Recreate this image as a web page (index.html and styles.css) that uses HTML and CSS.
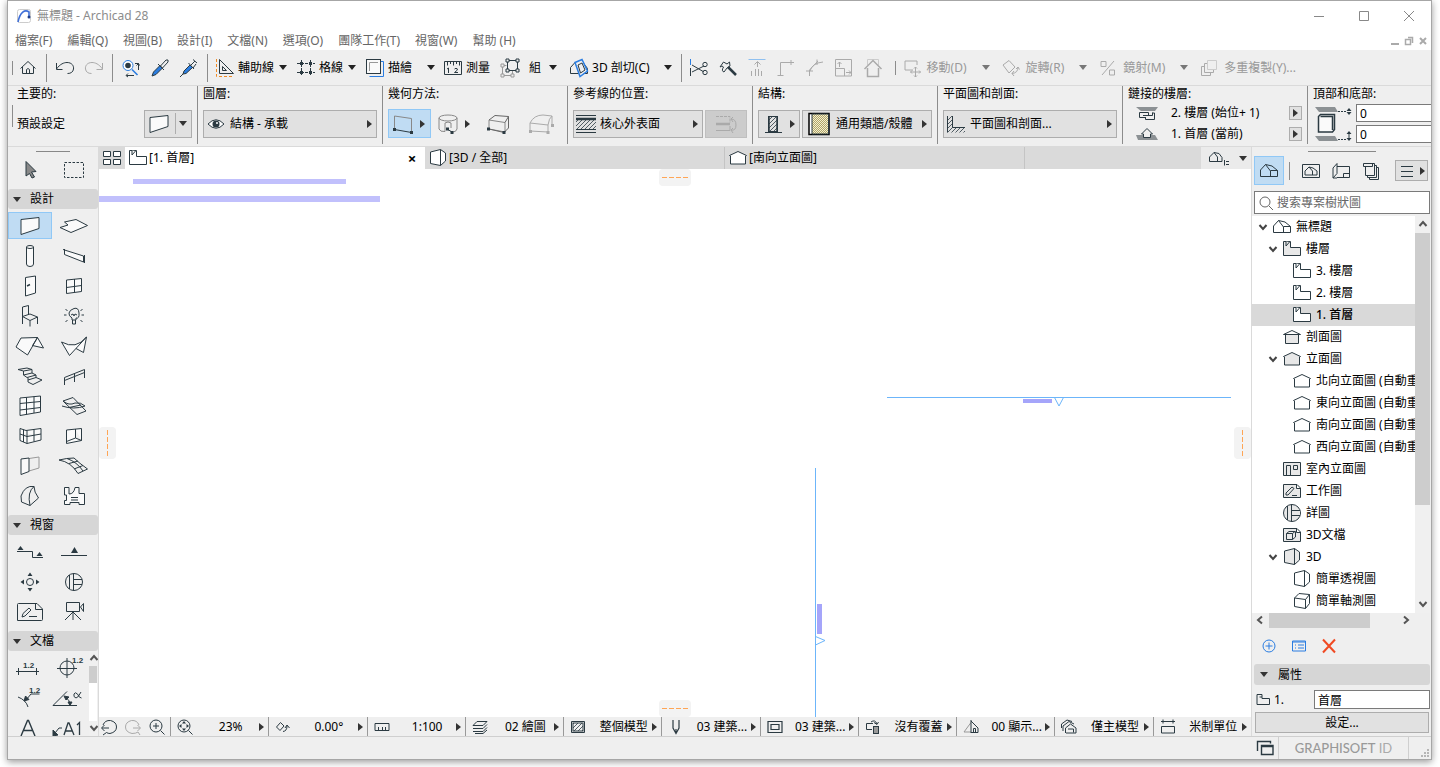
FILE: index.html
```html
<!DOCTYPE html>
<html lang="zh-Hant">
<head>
<meta charset="utf-8">
<title>無標題 - Archicad 28</title>
<link rel="stylesheet" href="styles.css">
</head>
<body>
<svg class="sprite" aria-hidden="true">
<defs>
<pattern id="hatch" width="4" height="4" patternUnits="userSpaceOnUse"><path d="M-1 1L1 -1M0 4L4 0M3 5L5 3" stroke="#2b3a42" fill="none" stroke-width=".8"/></pattern>
<pattern id="dots" width="2" height="2" patternUnits="userSpaceOnUse"><rect width="2" height="2" fill="#f4f0d0"/><path d="M0 0h1v1H0zM1 1h1v1H1z" fill="#b0a468"/></pattern>
<g id="home"><path d="M-7.5 .5L0 -6.5L7.5 .5M-5.5 -1V5.5H5.5V-1M-1.5 5.5V1.5Q0 -.5 1.5 1.5V5.5"/></g>
<g id="undo"><path d="M-8.5 -5V1.5H-2.5M-8.5 1C-5 -4 -1 -5.5 2 -5.5C7 -5.5 9 -2 8.5 1C8 4 6 5.5 2.5 5.5"/></g>
<g id="redo"><path d="M8.5 -5V1.5H2.5M8.5 1C5 -4 1 -5.5 -2 -5.5C-7 -5.5 -9 -2 -8.5 1C-8 4 -6 5.5 -2.5 5.5"/></g>
<g id="zoomsel"><circle cx="-3" cy="-2.5" r="5" stroke="#2a7de1" fill="#fff"/><circle cx="-3" cy="-2.5" r="2.8" fill="#2b3a42" stroke="none"/><path d="M1 1.5L6.5 7" stroke="#2a7de1" stroke-width="1.6"/><path d="M4 -4.5H7.5V2M5.5 -2.5L7.5 -4.5L8.5 -2.5M3 7.5H-4.5M-3 5.5L-5 7.5L-3 9"/></g>
<g id="dropper"><path d="M-8 8L-6.500 4L0 -2.500L2.500 0L-4 6.500Z" fill="#2a7de1" stroke="#2b3a42"/><path d="M-2 -4L4 2M.500 -2L6 -8Q9 -9 8 -6L2.500 0"/></g>
<g id="syringe"><path d="M-6 6L-5 3L1 -3L3.500 -.500L-3 5.500Z" fill="#2a7de1" stroke="#2b3a42"/><path d="M-9 9L-6 6M-.500 -5L5 1M2 -3L6 -7M4 -8.500L8 -5M1 -2L5 -6M4 0L7 -4"/></g>
<g id="guide"><path d="M-5.500 -8.500V5.500H8.500ZM-2.500 -1.500V2.500H1.500Z"/><path d="M-8.500 -9V8.500H9" stroke="#f08a24" stroke-dasharray="3 2"/></g>
<g id="gridic"><path d="M-9 -4.500H9M-9 4.500H9M-4.500 -8V8M4.500 -8V8" stroke-dasharray="3 1"/><path d="M-6 -6h3v3h-3zM3 -6h3v3h-3zM-6 3h3v3h-3zM3 3h3v3h-3z" fill="currentColor" stroke="none"/></g>
<g id="trace"><path d="M-5.500 8.500H8.500V-6.500H6" stroke="#2a7de1"/><rect x="-8.500" y="-8.500" width="14" height="14" fill="#fafafa"/><path d="M-5.500 3V-5.500H3" stroke="#999"/></g>
<g id="measure"><path d="M-8.500 -6.500H8.500V6.500H-8.500ZM-5.500 -6V-2.500M-2.500 -6V-4M.500 -6V-2.500M3.500 -6V-4M6.500 -6V-2.500M-4.500 0V5M-6 1L-4.500 0M1.500 1Q3 -.500 4.500 1Q4.500 2.500 1.500 4.500H5"/></g>
<g id="group"><path d="M-2.500 -7.500H7.500V2.500H-2.500Z"/><path d="M-3.500 -2.500H-7.500V7.500H2.500V3" stroke="#999"/><path d="M-4 -9h3v3h-3zM6 -9h3v3h-3zM6 1h3v3h-3zM-4 1h3v3h-3z" fill="#efefef"/><path d="M-9 -4h3v3h-3zM-9 6h3v3h-3zM1 6h3v3h-3z" fill="#efefef" stroke="#999"/></g>
<g id="cut3d"><path d="M-8.500 5.500V-.500L-4 -5.500H4L8.500 .500V5.500H-8.500M-4 -5.500L1 0V5"/><path d="M-4 -5.500L3 -8.500L8.500 3L1 8.500Z" fill="#efefef" stroke="#2a7de1" stroke-width="1.500"/><path d="M-1 -3L3 -5L6 2L1.500 5Z"/></g>
<g id="scissors"><path d="M-8.500 -9V-3" stroke="#2a7de1"/><path d="M-8.500 0V8M-7 -3L5 4M-7 4L5 -2"/><circle cx="6" cy="-3.500" r="2.200"/><circle cx="6" cy="4.500" r="2.200"/></g>
<g id="axe"><path d="M-8 -1L-4.500 -6L-1 -4L1.500 -6L2 -2L-1 0L-4 4Q-7 3 -4.500 -1L-6 -2Z"/><path d="M0 -1L8 7" stroke-width="2.500"/></g>
<g id="resize"><path d="M-8.500 -8.500H8.500" stroke="#8fc0f0"/><path d="M.500 -6V-1M-2.500 -3.500L.500 -6.500L3.500 -3.500M-5.500 3V8M-1.500 1V8M1.500 1V8M4.500 3V8"/></g>
<g id="corner"><path d="M-5.500 8V-5.500H8M-8.500 7.500H-2.500M5 -8V-3"/></g>
<g id="arcorner"><path d="M-5.500 8V2L3 -7M-9 3H-2M-5 3Q-3 -5 8 -6M2 -8.500V-3"/></g>
<g id="scaleic"><path d="M-8.500 -8.500H7.500V8H-8.500ZM-8.500 .500H.500V8M-4.500 -6V-1M-6.500 -4L-4.500 -6L-2.500 -4M2 4.500H7M5 2.500L7 4.500L5 6.500"/></g>
<g id="roofup"><path d="M-5.500 -3V-8.500H5.500V-3" stroke="#ccc"/><path d="M-8.500 1L0 -7.500L8.500 1M-5.500 0V8.500H5.500V0" stroke-width="1.500"/></g>
<g id="moveic"><path d="M1 2H-7V-7H5V-3"/><path d="M3.500 -1V9M-1.500 4H8.500M2 .500L3.500 -1L5 .500M2 7.500L3.500 9L5 7.500M0 2.500L-1.500 4L0 5.500M7 2.500L8.500 4L7 5.500"/></g>
<g id="rotic"><path d="M-8 -3L-2 -7.500L4 -1L-2 5Z M7 -1Q7 5 1 5.500M5 1L7 -1L8.500 1.500M3 3L1 5.500L3 8"/></g>
<g id="mirror"><path d="M-7 -6.500h5v5h-5zM1.500 2h5v5h-5zM6 -7L-6 7"/></g>
<g id="multi"><path d="M-1.500 -7.500h9v9h-9z" stroke="#ccc"/><path d="M-2 -4.500H-4.500V4.500H4.500V2M-5 -1.500H-7.500V7.500H1.500V5"/></g>
<g id="wall"><path d="M-9 -6.500L9 -8.500V2.500L-9 8.500Z" fill="#fafafa"/></g>
<g id="eye"><path d="M-8 0Q0 -8.500 8 0Q0 8.500 -8 0Z" fill="#fff"/><circle r="3.500" fill="#2b3a42" stroke="none"/><circle cx="1" cy="-1" r="1" fill="#fff" stroke="none"/></g>
<g id="geo1"><path d="M-8.500 6V-8L8.500 -5.500V8.500" stroke="#888"/><path d="M-8.500 5.500L8.500 8.500"/><path d="M-10 4h3v3h-3zM7 7h3v3h-3z" fill="#2b3a42" stroke="none"/></g>
<g id="geo2"><g stroke="#888"><ellipse cx="0" cy="-6" rx="9" ry="3"/><path d="M-9 -6V5Q-8 8 -3 7.500V-1Q0 -3 3 -1V4M9 -6V5Q8 8 5 8"/></g><path d="M-1 5L4 8"/><path d="M-2 3.500h3v3h-3zM2.500 7h3v3h-3z" fill="#2b3a42" stroke="none"/></g>
<g id="geo3"><path d="M-9 5V-4L7 -1.500V8Z" stroke="#888"/><path d="M-9 -4L-3 -8.500L10.500 -7.500V4L6 8.500M7 -1.500L10.500 -7.500M-9 5L6 8.500" stroke="#666"/><path d="M-11 3.500h3v3h-3zM4.500 7h3v3h-3z" fill="#2b3a42" stroke="none"/></g>
<g id="geo4"><path d="M-11 7V-1Q-7 -9 2 -9L11 -8V2M-11 -1L7 1Q8 -6 11 -8M7 1V8L-11 7"/><path d="M-12 6h3v3h-3zM5.500 7h3v3h-3zM10 0h3v3h-3z" fill="currentColor" stroke="none"/></g>
<g id="refl"><rect x="-10" y="-4" width="20" height="9" fill="url(#hatch)" stroke="none"/><path d="M-10 -8.500H10M-10 8.500H10M-10 5.500H10"/><path d="M-10 -5H10" stroke-width="2.500"/></g>
<g id="flip"><path d="M-7 -7.500H7V-1" stroke-dasharray="3 1"/><path d="M-7 6.500H7V2M8 -5Q13 -5 13 1T8 6M10 -7L8 -5L10 -2M10 4L8 6L10 9"/><path d="M-7 0H7" stroke-width="2.500"/></g>
<g id="struct"><rect x="-4.500" y="-7.500" width="9" height="15" fill="url(#hatch)"/><path d="M-8 8.500H9" /><path d="M-4 -8V8M4 -8V8" stroke-width="1.500"/></g>
<g id="compo"><rect x="-10" y="-10.500" width="20" height="21" fill="#fff" stroke="#000" stroke-width="1.500"/><path d="M-7 -10H9.500V10H-7Z" fill="url(#dots)"/></g>
<g id="plansec"><path d="M-8.500 -8V8.500H9V3.500H-3.500V-8Z" fill="url(#hatch)" stroke="none"/><path d="M-8.500 -8V8.500M-3.500 -8V3.500H9"/></g>
<g id="story2"><path d="M-11 -6H11L8 -2H-6Z" fill="#8c9194" stroke="none"/><path d="M-1 4.500H-7.500V-.500H1.500V2.500M-4 2.500H5.500V-.500M5.500 0H7.500V6.500H-1.500V4"/></g>
<g id="story1"><path d="M-11 1H8L11 6H-9Z" fill="#8c9194" stroke="none"/><path d="M-5.500 0L0 -5.500L5.500 0H3.500V3.500H-3.500V0Z" fill="#efefef"/></g>
<g id="topbot"><path d="M-18 -17H2L5 -12H-14ZM-18 12H2L5 17H-14Z" fill="#8c9194" stroke="none"/><path d="M-14.500 -7.500L-12.500 -9.500H1.500V5.500L-.500 8H-14.500ZM-12.500 -7.500H-.500V6" stroke-width="1.500" fill="#fafafa"/><path d="M5 -12.500H14M5 15.500H14" stroke-dasharray="2 1"/><path d="M16 -16L13.500 -13H18.500ZM16 -9L13.500 -12H18.500ZM16 7L13.500 10H18.500ZM16 17L13.500 14H18.500Z" fill="#2b3a42" stroke="none"/><path d="M16 9V15"/></g>
<g id="cursor"><path d="M-4 -8.500L6 1.500L1.500 2L4.500 7L2 8L-.500 3.500L-4 6Z" fill="#888" /></g>
<g id="marquee"><rect x="-9.500" y="-7.500" width="19" height="15" stroke-dasharray="2.500 1.500"/></g>
<g id="slab"><path d="M-9.500 -4L2 -6.500L13.500 -.500L-3 6.500L-14 1.500L-6 -1Z" fill="#fafafa"/></g>
<g id="column"><path d="M-3.500 -9V8Q-3.500 10.500 0 10.500Q3.500 10.500 3.500 8V-9" fill="#fafafa"/><ellipse cx="0" cy="-9" rx="3.500" ry="1.500"/></g>
<g id="beam"><path d="M-9.500 -6L9.500 0V6L-9.500 -1.500Z" fill="#fafafa"/><path d="M-11 -6.500L-9 -6M10.500 -1V7M9.500 6H11M-9.500 -7V-2"/></g>
<g id="door"><path d="M-4.500 -8.500L5.500 -10V7L-4.500 10Z" fill="#fafafa"/><path d="M-3 0L0 -1.500" stroke-width="1.500"/></g>
<g id="window"><path d="M-7.500 -6L7.500 -7.500V5.500L-7.500 7.500ZM.500 -7V6.500M-7.500 1.500L7.500 -.500" fill="#fafafa"/></g>
<g id="chair"><path d="M-7.500 8V-9L-1.500 -10.500V-1M-7.500 .500L0 -2L7.500 1L0 4.500ZM7.500 1V8M0 4.500V10.500"/></g>
<g id="lamp"><path d="M-2 4V2Q-5.500 0 -5 -3T0 -7.500T5 -3T2 2V4ZM-1.500 4V8H1.500V4M-3 -1L-1 -2L0 0L1 -2L3 -1M-10 -1H-7.500M7.500 -1H10M-8.500 -7L-6.500 -5M8.500 -7L6.500 -5M-8.500 6L-6.500 4M8.500 6L6.500 4"/></g>
<g id="roof"><path d="M-14 1L-9 -8L7.500 -8.500L-2.500 9ZM7.500 -8.500L13.500 2L2.500 -.500Z" fill="#fafafa"/></g>
<g id="shell"><path d="M-12.500 -4Q2 4 12.500 -9L-4.500 9.500ZM2 2.500L9.500 6.500L12.500 -9" fill="#fafafa"/></g>
<g id="stair"><path d="M-12 -6.500L-3 -8L2 -6.500L-6.500 -5ZM2 -6.500V-3L-6.500 -1V-5M2 -3L6 -1L-3 1.500L-6.500 -1M6 -1V1.500L-2 4V1.500M6 1.500L12 4L3 8.500L-2 6V4"/></g>
<g id="railing"><path d="M-9.500 9V1.500L10.500 -6.500V2M-9.500 4.500L10.500 -3.500M.500 -2.500V6"/></g>
<g id="curtain"><path d="M-10 -8L10.500 -10V6L-10 9.500ZM-3.500 -8.500V8.500M4 -9.500V7M-10 -2.500L10.500 -4.500M-10 4L10.500 1.500" fill="#fafafa"/></g>
<g id="meshes"><path d="M-11 -5L-1 -8.500L12 5L3 8.500ZM-12 0Q0 4 11 0M-11 -5Q-5 0 1 -3Q7 -4 11 0M-5 1.500L7 -1"/></g>
<g id="cwall"><path d="M-10 -7.500L-4 -5.500L11 -7.500V4L-3 7.500L-10 4.500ZM-10 -2L-3 .500L11 -2M-6.500 -6.500V6M-3 -5.500V7.500M4 -6.500V5.500" fill="#fafafa"/></g>
<g id="skyl"><path d="M-7.500 -6L7.500 -7.500V4.500L-7.500 7.500ZM1.500 -7V2L7.500 4.500M1.500 2L-7.500 5.500" fill="#fafafa"/></g>
<g id="opening"><path d="M-1 -7.500L9 -9V2L-1 5" stroke="#999"/><path d="M-9 -7L-1 -8V5.500L-9 8.500Z" fill="#fafafa"/></g>
<g id="meshg"><path d="M-15 -6Q-7 -8 0 -8Q5 -3 13.500 3L4 7.500Q-3 -4 -15 -6ZM-7 -7.500Q3 -4 9 5M-5 -2.500L4 -5M0 3L9 -.500"/></g>
<g id="morph"><path d="M-9 0Q-5 -11 4 -9.500Q4 -4 8.500 2L0 9.500L-8.500 6ZM4 -9.500Q-3 -4 0 9.500"/></g>
<g id="zone"><path d="M-9.500 -8.500H-5V-2Q0 -2 1 -8.500H5V-2.500H10.500V8.500H5V6.500H-4V8.500H-9.500V4.500H-7.500V-1H-9.500ZM-3 1.500H4M-3 4H4" fill="#fafafa"/></g>
<g id="section"><path d="M-13 -.500H2.500V5.500M2.500 5.500H13"/><path d="M-12.500 -2L-9.500 -6L-6.500 -2ZM6.500 4L9.500 0L12.500 4Z" fill="#2b3a42" stroke="none"/></g>
<g id="elev"><path d="M-13 3.500H13"/><path d="M-3 1L0.500 -5L4 1Z" fill="#2b3a42" stroke="none"/></g>
<g id="intel"><circle r="3.500"/><path d="M-2.500 -6L0 -9.500L2.500 -6ZM-2.500 6L0 9.500L2.500 6ZM-6 -2.500L-9.500 0L-6 2.500ZM6 -2.500L9.500 0L6 2.500Z" fill="#2b3a42" stroke="none"/></g>
<g id="detail"><circle r="8.500"/><path d="M-4.500 -7V7M-.500 -8.500V8.500M8 -2.500H-.500V2.500H8"/></g>
<g id="worksheet"><path d="M-12.500 -7.500Q-12.500 -8.500 -11.500 -8.500H7L12.500 -3V7.500Q12.500 8.500 11.500 8.500H-12.500ZM5.500 -8.500V-2.500H12.500M-8 5L-7 1.500L-1 -4L1 -2L-5 4ZM-1 4.500H7"/></g>
<g id="camera"><path d="M-7.500 -9.500H5.500V-.500H-7.500ZM6.500 -5L9.500 -8.500V-.500ZM-1 -.500V8M-1 0L-9 8M-1 0L7 8"/></g>
<g id="dim"><path d="M-13 3.500H10M-10.500 0V7M7.500 0V7"/><text x="-6" y="0" class="tiny">1.2</text></g>
<g id="level"><circle cx="-3" cy="0" r="7"/><path d="M-13 .500H7M-3 -10V10"/><text x="2" y="-5" class="tiny">1.2</text></g>
<g id="radial"><path d="M-11 -1Q-3 2 -1 9M10.500 -4H2L-3 2"/><path d="M-5 3L-3.500 -2L0 1.500Z" fill="#2b3a42"/><text x="0" y="-5" class="tiny">1.2</text></g>
<g id="angle"><path d="M-17 7.500H7M-17 7.500L-3 -6.500M-5 -1Q0 2 0 6"/><path d="M-6 -2L-1 -1L-4 2ZM-2 4H2L0 7.500Z" fill="#2b3a42"/><path d="M11 -6Q8 0 6 0Q3 -1 4 -4Q5 -6.500 7.500 -4Q9 0 11.500 0"/></g>
<g id="texta"><path d="M-8 8L-1.500 -7.500H-.500L6 8M-5.500 2.500H3.500" stroke-width="1.400"/></g>
<g id="labela"><path d="M-8 0H-11L-15 5"/><path d="M-17 8V2L-12 7Z" fill="#2b3a42"/><path d="M-6 7L-2 -5H-1L4 7M-4.500 3H2M7 -3L9.500 -5.500V7" stroke-width="1.300"/></g>
<g id="tiles"><path d="M-8.500 -6.500H-1.500V-1.500H-8.500ZM1.500 -6.500H8.500V-1.500H1.500ZM-8.500 1.500H-1.500V6.500H-8.500ZM1.500 1.500H8.500V6.500H1.500Z"/></g>
<g id="story"><path d="M-8.500 -7.500H-1.500V-1.500H8.500V6.500H-8.500Z"/><path d="M-6 -7.500V-3L-2.500 -7"/></g>
<g id="box3d"><path d="M-7.500 -6L2.500 -8.500V7.500L-7.500 5.500ZM2.500 -8.500L7.500 -5V3L2.500 7.500"/></g>
<g id="proj"><path d="M-8.500 -1L-3.500 -6.500L3 -5L8.500 -.500V5.500H-8.500V-1M-3.500 -6.500L1.500 0V5.500M1.500 -.500H8.500"/></g>
<g id="projsmall"><path d="M-9.500 -1L-5 -5.500L0 -4.500L3 -.500V3.500H-9.500V-1M-5 -5.500L-1.500 -1V3.500M5.500 2V7.500M7 3.500H10M7 6.500H10"/></g>
<g id="viewmap"><path d="M-8.500 -6.500H8.500V6.500H-8.500ZM-6 4V0L-2 -4L2 -3L6 0V4H-6M-2 -4L1.500 0V4"/></g>
<g id="layout"><path d="M-4 -4.500H8.500V6.500H-4M-8 7V-3L-4 -7.500V2.500L-8 7H-4M2.500 6.500V2.500H8.500"/></g>
<g id="publish"><path d="M-5.500 -5V4.500H3.500V-7.500H-5.500M-7.500 -7.500H1.500V-4.500H-7.500ZM3.500 -5.500H5.500V6.500H-3.500V5M6 -3.500H7.500V8.500H-1.500V7"/></g>
<g id="burger"><path d="M-6 -4.500H6M-6 .500H6M-6 5.500H6"/></g>
<g id="mag"><circle cx="-1" cy="-1" r="5"/><path d="M3 3L7 7"/></g>
<g id="secic"><path d="M-6.500 -2.500H6.500V6.500H-6.500Z" fill="#e8e8e8"/><path d="M-8.500 -2.500L0 -6.500L8.500 -2.500Z"/></g>
<g id="elic"><path d="M-8.500 -2.500L0 -6.500L8.500 -2.500L7.500 -2V6H-7.500V-2Z"/></g>
<g id="interior"><path d="M-8.500 -6.500H8.500V6.500H-8.500Z" fill="#e8e8e8"/><path d="M-5.500 6.500V-3.500H-1.500V6.500M1.500 -3.500H5.500V.500H1.500Z"/></g>
<g id="worksm"><path d="M-8.500 -6.500H5L8.500 -3V6.500H-8.500ZM4.500 -6V-2.500H8M-6 4V2L0 -4L2 -2.500L-4 4ZM0 4.500H5"/></g>
<g id="doc3d"><path d="M-8.500 -6.500H5L8.500 -3V6.500H-8.500ZM4.500 -6V-2.500H8M-5.500 -1.500H.500V4.500H-5.500ZM-5.500 -1.500L-3 -3.500H3.500V2L.500 4.500M.500 -1.500L3 -3.500"/></g>
<g id="axo"><path d="M-7.500 -3L3.500 -1.500V7.500L-7.500 5.500ZM-7.500 -3L-3 -7.500L7.500 -6.500V2.500L3.500 7.500M3.500 -1.500L7.500 -6.500"/></g>
<g id="plus"><circle r="6"/><path d="M-3.500 0H3.500M0 -3.500V3.500"/></g>
<g id="listic"><path d="M-6.500 -5H6.500V5H-6.500ZM-4 -1H-3M-4 2H-3M-1 -1H5M-1 2H5M-6.500 -4H6.500"/></g>
<g id="cross"><path d="M-6 -6.500L6 6.500M6 -6.500L-6 6.500"/></g>
<g id="folder"><path d="M-6 -5.500H-1V-1.500H6.500V4.500H-6ZM-1 -3H-3.500"/></g>
<g id="zprev"><path d="M-7 1H0M-4.500 -2L-7.500 1L-4.500 4M-6 -2Q-4 -7 1.500 -6.500Q7.500 -5 7.500 0T1 6.500Q-1 6.500 -2.500 5.500L-6 8"/></g>
<g id="znext"><path d="M7 1H0M4.500 -2L7.500 1L4.500 4M6 -2Q4 -7 -1.500 -6.500Q-7.500 -5 -7.500 0T-1 6.500Q3 6.500 5 5L7 8"/></g>
<g id="zin"><circle cx="-1" cy="-1" r="6"/><path d="M3.500 3.500L7.500 7.500M-4 -1H2M-1 -4V2"/></g>
<g id="zfit"><circle cx="-1" cy="-1" r="6"/><path d="M3.500 3.500L7.500 7.500"/><path d="M-1 -6L1 -3.500H-3ZM-1 4L1 1.500H-3ZM-6 -1L-3.500 -3V1ZM4 -1L1.500 -3V1Z" fill="currentColor" stroke="none"/></g>
<g id="orient"><path d="M-6.500 0L-2.500 -4.500L1 -1L-3 3.500ZM0 4.500Q4 4 4 -1M2 1L4 -2L6.500 1"/></g>
<g id="scale2"><path d="M-7 -3.500H7V3.500H-7ZM-3.500 3V0M.500 3V0M3.500 3V0"/></g>
<g id="layers"><path d="M-7 -1.500L-3 -5.500H7L3 -1.500ZM-7 1.500H3L7 -2.500M-7 4.500H3L7 .500M-5 6.500H3L7 3"/></g>
<g id="modelf"><path d="M-6.500 -5.500H6.500V5.500H-6.500Z"/><rect x="-5" y="-4" width="10" height="8" fill="url(#hatch)"/></g>
<g id="pen"><path d="M-3 -7V1L0 6.500L3 1V-7M0 2V5" stroke-width="1.200"/></g>
<g id="frame"><path d="M-7 -5.500H7V5.500H-7ZM-4 -2.500H4V2.500H-4Z" stroke-width="1.200"/></g>
<g id="override"><path d="M-1 2.500H-6.500V-3.500H0M-2 -5Q2 -8 4 -3M1 -4.500L4 -2.500L5.500 -5"/><rect x="0.500" y="-.500" width="5" height="7" fill="#999"/></g>
<g id="reno"><path d="M0 5H-7L0 -4.500" stroke="#999"/><path d="M0 -7V6M0 -6L7 1V5.500H0M2.500 5.500V1.500H4.500V5"/></g>
<g id="designo"><path d="M-3.500 6V1L1.500 -3L7 1V6H-3M-1 2H4.500V5.500M-6 4V-1L0 -5.500L5 -3M-7.500 1V-3L-2 -7L3 -5.500"/></g>
<g id="units"><path d="M-7 -5.500H7M-5 -7.500V-3.500M5 -7.500V-3.500M-6.500 -.500H6.500V6H-6.500Z"/></g>
<g id="windows"><path d="M-7.500 3V-6.500H5.500V-4.500M-3.500 -2.500H8V6.500H-3.500ZM-3.500 -1.500H8" stroke-width="1.400"/></g>
<g id="chev"><path d="M-3.500 -2L0 2L3.500 -2" stroke-width="2"/></g>
</defs>
</svg>

<div class="window">
<header class="titlebar">
  <svg class="logo" viewBox="0 0 14 14"><rect x=".5" y=".5" width="13" height="13" rx="2" fill="#fff" stroke="#ccc"/><path d="M1 13C3 3 8 0 12 3V7" fill="none" stroke="#3f6fd8" stroke-width="1.600"/><circle cx="12" cy="8" r="1.500" fill="#1d3f8f"/></svg>
  <h1>無標題 - Archicad 28</h1>
  <div class="winbtns">
    <button aria-label="最小化"><svg viewBox="-6 -6 12 12"><path d="M-5 .5H5"/></svg></button>
    <button aria-label="最大化"><svg viewBox="-6 -6 12 12"><path d="M-4.5 -4.5H4.500V4.500H-4.500Z"/></svg></button>
    <button aria-label="關閉"><svg viewBox="-6 -6 12 12"><path d="M-5 -5L5 5M5 -5L-5 5"/></svg></button>
  </div>
</header>
<nav class="menubar">
  <button>檔案(F)</button><button>編輯(Q)</button><button>視圖(B)</button><button>設計(I)</button><button>文檔(N)</button><button>選項(O)</button><button>團隊工作(T)</button><button>視窗(W)</button><button>幫助 (H)</button>
  <div class="docbtns">
    <button aria-label="最小化文件"><svg viewBox="-5 -5 10 10"><path d="M-4 3H4" stroke-width="2"/></svg></button>
    <button aria-label="還原文件"><svg viewBox="-5 -5 10 10"><path d="M-3.500 -1.500H1.500V3.500H-3.500ZM-1 -3.500H3.500V2" stroke-width="1.500"/></svg></button>
    <button aria-label="關閉文件"><svg viewBox="-5 -5 10 10"><path d="M-3 -3L3 3M3 -3L-3 3" stroke-width="2"/></svg></button>
  </div>
</nav>

<div class="toolbar">
  <i class="sep short"></i>
  <button aria-label="首頁"><svg class="ic"><use href="#home"/></svg></button>
  <i class="sep"></i>
  <button aria-label="復原"><svg class="ic"><use href="#undo"/></svg></button>
  <button aria-label="重做" disabled><svg class="ic"><use href="#redo"/></svg></button>
  <i class="sep"></i>
  <button aria-label="尋找並選取"><svg class="ic"><use href="#zoomsel"/></svg></button>
  <button aria-label="拾取參數"><svg class="ic"><use href="#dropper"/></svg></button>
  <button aria-label="注入參數"><svg class="ic"><use href="#syringe"/></svg></button>
  <i class="sep"></i>
  <button class="lab"><svg class="ic"><use href="#guide"/></svg>輔助線</button><button class="caret" aria-label="輔助線選項"></button>
  <button class="lab"><svg class="ic"><use href="#gridic"/></svg>格線</button><button class="caret" aria-label="格線選項"></button>
  <button class="lab"><svg class="ic"><use href="#trace"/></svg>描繪</button><button class="caret far" aria-label="描繪選項"></button>
  <button class="lab"><svg class="ic"><use href="#measure"/></svg>測量</button>
  <button class="lab wide"><svg class="ic"><use href="#group"/></svg>組</button><button class="caret mid" aria-label="組選項"></button>
  <button class="lab"><svg class="ic"><use href="#cut3d"/></svg>3D 剖切(C)</button><button class="caret far" aria-label="剖切選項"></button>
  <i class="sep"></i>
  <button aria-label="分割"><svg class="ic"><use href="#scissors"/></svg></button>
  <button aria-label="修剪"><svg class="ic"><use href="#axe"/></svg></button>
  <button aria-label="調整" disabled><svg class="ic"><use href="#resize"/></svg></button>
  <button aria-label="相交" disabled><svg class="ic"><use href="#corner"/></svg></button>
  <button aria-label="圓角" disabled><svg class="ic"><use href="#arcorner"/></svg></button>
  <button aria-label="調整大小" disabled><svg class="ic"><use href="#scaleic"/></svg></button>
  <button aria-label="修剪到屋頂" disabled><svg class="ic"><use href="#roofup"/></svg></button>
  <i class="sep short lead"></i>
  <div class="edit">
    <button class="lab" disabled><svg class="ic"><use href="#moveic"/></svg>移動(D)</button><button class="caret far" disabled aria-label="移動選項"></button>
    <button class="lab" disabled><svg class="ic"><use href="#rotic"/></svg>旋轉(R)</button><button class="caret far" disabled aria-label="旋轉選項"></button>
    <button class="lab" disabled><svg class="ic"><use href="#mirror"/></svg>鏡射(M)</button><button class="caret far" disabled aria-label="鏡射選項"></button>
    <button class="lab" disabled><svg class="ic"><use href="#multi"/></svg>多重複製(Y)...</button>
  </div>
</div>

<div class="infobox">
  <section class="first"><h2>主要的:</h2><div class="row"><span class="grow">預設設定</span><button class="box split" aria-label="預設設定選擇"><svg class="ic"><use href="#wall"/></svg><i class="bar"></i><i class="down"></i></button></div></section>
  <section><h2>圖層:</h2><div class="row"><button class="box fill"><svg class="ic tight"><use href="#eye"/></svg><span>結構 - 承載</span><i class="tri"></i></button></div></section>
  <section><h2>幾何方法:</h2><div class="row"><button class="geo on" aria-label="直牆"><svg class="ic"><use href="#geo1"/></svg><i class="tri"></i></button><button class="geo" aria-label="曲牆"><svg class="ic"><use href="#geo2"/></svg><i class="tri"></i></button><button class="geo plain" aria-label="梯形牆"><svg class="ic"><use href="#geo3"/></svg></button><button class="geo plain" disabled aria-label="多邊形牆"><svg class="ic"><use href="#geo4"/></svg></button></div></section>
  <section><h2>參考線的位置:</h2><div class="row"><button class="box fill"><svg class="ic tight"><use href="#refl"/></svg><span>核心外表面</span><i class="tri"></i></button><button class="box flip" disabled aria-label="翻轉"><svg class="ic"><use href="#flip"/></svg></button></div></section>
  <section><h2>結構:</h2><div class="row"><button class="box small" aria-label="結構類型"><svg class="ic"><use href="#struct"/></svg><i class="tri"></i></button><button class="box fill"><svg class="ic"><use href="#compo"/></svg><span>通用類牆/殼體</span><i class="tri"></i></button></div></section>
  <section><h2>平面圖和剖面:</h2><div class="row"><button class="box fill"><svg class="ic tight"><use href="#plansec"/></svg><span>平面圖和剖面...</span><i class="tri"></i></button></div></section>
  <section><h2>鏈接的樓層:</h2><div class="links">
    <div><svg class="ic"><use href="#story2"/></svg><span>2. 樓層 (始位+ 1)</span><button aria-label="選擇頂部樓層"><i class="tri"></i></button></div>
    <div><svg class="ic"><use href="#story1"/></svg><span>1. 首層 (當前)</span><button aria-label="選擇首層"><i class="tri"></i></button></div></div></section>
  <section class="last"><h2>頂部和底部:</h2><div class="offsets"><svg class="tb"><use href="#topbot"/></svg><div><input value="0" aria-label="頂部偏移"><input value="0" aria-label="底部偏移"></div></div></section>
</div>

<main class="workspace">
<aside class="toolbox">
  <i class="grip"></i>
  <div class="tools pick"><button aria-label="箭頭"><svg class="ic"><use href="#cursor"/></svg></button><button aria-label="選取框"><svg class="ic"><use href="#marquee"/></svg></button></div>
  <h3><i class="down"></i>設計</h3>
  <div class="tools">
    <button class="on" aria-label="牆"><svg class="ic"><use href="#wall"/></svg></button><button aria-label="板"><svg class="ic"><use href="#slab"/></svg></button>
    <button aria-label="柱"><svg class="ic"><use href="#column"/></svg></button><button aria-label="梁"><svg class="ic"><use href="#beam"/></svg></button>
    <button aria-label="門"><svg class="ic"><use href="#door"/></svg></button><button aria-label="窗"><svg class="ic"><use href="#window"/></svg></button>
    <button aria-label="物件"><svg class="ic"><use href="#chair"/></svg></button><button aria-label="燈"><svg class="ic"><use href="#lamp"/></svg></button>
    <button aria-label="屋頂"><svg class="ic"><use href="#roof"/></svg></button><button aria-label="殼體"><svg class="ic"><use href="#shell"/></svg></button>
    <button aria-label="樓梯"><svg class="ic"><use href="#stair"/></svg></button><button aria-label="欄杆"><svg class="ic"><use href="#railing"/></svg></button>
    <button aria-label="幕牆"><svg class="ic"><use href="#curtain"/></svg></button><button aria-label="天窗"><svg class="ic"><use href="#meshes"/></svg></button>
    <button aria-label="角幕牆"><svg class="ic"><use href="#cwall"/></svg></button><button aria-label="角窗"><svg class="ic"><use href="#skyl"/></svg></button>
    <button aria-label="開口"><svg class="ic"><use href="#opening"/></svg></button><button aria-label="網面"><svg class="ic"><use href="#meshg"/></svg></button>
    <button aria-label="變形體"><svg class="ic"><use href="#morph"/></svg></button><button aria-label="區域"><svg class="ic"><use href="#zone"/></svg></button>
  </div>
  <h3><i class="down"></i>視窗</h3>
  <div class="tools">
    <button aria-label="剖面"><svg class="ic"><use href="#section"/></svg></button><button aria-label="立面"><svg class="ic"><use href="#elev"/></svg></button>
    <button aria-label="室內立面"><svg class="ic"><use href="#intel"/></svg></button><button aria-label="詳圖"><svg class="ic"><use href="#detail"/></svg></button>
    <button aria-label="工作圖"><svg class="ic"><use href="#worksheet"/></svg></button><button aria-label="相機"><svg class="ic"><use href="#camera"/></svg></button>
  </div>
  <h3><i class="down"></i>文檔</h3>
  <div class="docs">
    <div class="tools">
      <button aria-label="線性標註"><svg class="ic"><use href="#dim"/></svg></button><button aria-label="標高"><svg class="ic"><use href="#level"/></svg></button>
      <button aria-label="半徑標註"><svg class="ic"><use href="#radial"/></svg></button><button aria-label="角度標註"><svg class="ic"><use href="#angle"/></svg></button>
      <button aria-label="文字"><svg class="ic"><use href="#texta"/></svg></button><button aria-label="標籤"><svg class="ic"><use href="#labela"/></svg></button>
    </div>
    <div class="vscroll thin"><svg class="ar up"><use href="#chev"/></svg><div class="track"><i class="thumb"></i></div><svg class="ar"><use href="#chev"/></svg></div>
  </div>
</aside>

<section class="center">
  <div class="tabs">
    <button class="overview" aria-label="標籤概覽"><svg class="ic w"><use href="#tiles"/></svg></button>
    <div class="tab on"><svg class="ic w"><use href="#story"/></svg><span>[1. 首層]</span><button aria-label="關閉標籤">×</button></div>
    <div class="tab"><svg class="ic w"><use href="#box3d"/></svg><span>[3D / 全部]</span></div>
    <div class="tab"><svg class="ic w"><use href="#elic"/></svg><span>[南向立面圖]</span></div>
    <button class="navpop" aria-label="彈出瀏覽器"><svg class="ic"><use href="#projsmall"/></svg><i class="down"></i></button>
  </div>
  <div class="canvas">
    <svg class="drawing" role="img" aria-label="首層平面圖">
      <path d="M34 10H247V15H34ZM0 27H281V33H0Z" fill="#c1c0fc"/>
      <path d="M924 230H953V234H924ZM718 435H723V465H718Z" fill="#a5a5fa"/>
      <path d="M788 228.500H1132M716.500 299V548M955.500 228.500L960 237L964.500 228.500M716.500 467.500L726 471.500L716.500 476" fill="none" stroke="#6cb5fa"/>
    </svg>
    <i class="handle top"></i><i class="handle bottom"></i><i class="handle left"></i><i class="handle right"></i>
  </div>
  <div class="quick">
    <div class="zooms"><button aria-label="上一縮放"><svg class="ic"><use href="#zprev"/></svg></button><button aria-label="下一縮放" disabled><svg class="ic"><use href="#znext"/></svg></button><button aria-label="放大"><svg class="ic"><use href="#zin"/></svg></button></div>
    <button class="q"><svg class="ic"><use href="#zfit"/></svg><span>23%</span><i class="tri"></i></button>
    <button class="q"><svg class="ic"><use href="#orient"/></svg><span>0.00°</span><i class="tri"></i></button>
    <button class="q"><svg class="ic"><use href="#scale2"/></svg><span>1:100</span><i class="tri"></i></button>
    <button class="q"><svg class="ic"><use href="#layers"/></svg><span>02 繪圖</span><i class="tri"></i></button>
    <button class="q"><svg class="ic"><use href="#modelf"/></svg><span>整個模型</span><i class="tri"></i></button>
    <button class="q"><svg class="ic"><use href="#pen"/></svg><span>03 建築...</span><i class="tri"></i></button>
    <button class="q"><svg class="ic"><use href="#frame"/></svg><span>03 建築...</span><i class="tri"></i></button>
    <button class="q"><svg class="ic"><use href="#override"/></svg><span>沒有覆蓋</span><i class="tri"></i></button>
    <button class="q"><svg class="ic"><use href="#reno"/></svg><span>00 顯示...</span><i class="tri"></i></button>
    <button class="q"><svg class="ic"><use href="#designo"/></svg><span>僅主模型</span><i class="tri"></i></button>
    <button class="q"><svg class="ic"><use href="#units"/></svg><span>米制單位</span><i class="tri"></i></button>
  </div>
</section>

<aside class="navigator">
  <i class="grip"></i>
  <div class="maps">
    <button class="on" aria-label="專案樹狀圖"><svg class="ic"><use href="#proj"/></svg></button><i class="sep"></i>
    <button aria-label="視圖映射"><svg class="ic"><use href="#viewmap"/></svg></button><button aria-label="圖冊"><svg class="ic"><use href="#layout"/></svg></button><button aria-label="發佈器"><svg class="ic"><use href="#publish"/></svg></button>
    <button class="box menu" aria-label="選單"><svg class="ic"><use href="#burger"/></svg><i class="tri"></i></button>
  </div>
  <label class="search"><svg class="ic"><use href="#mag"/></svg><input type="text" placeholder="搜索專案樹狀圖" aria-label="搜索專案樹狀圖"></label>
  <div class="treewrap">
    <ul class="tree">
      <li><svg class="tw"><use href="#chev"/></svg><svg class="ic"><use href="#proj"/></svg>無標題</li>
      <li class="l1"><svg class="tw"><use href="#chev"/></svg><svg class="ic g"><use href="#story"/></svg>樓層</li>
      <li class="l2"><svg class="ic w"><use href="#story"/></svg>3. 樓層</li>
      <li class="l2"><svg class="ic w"><use href="#story"/></svg>2. 樓層</li>
      <li class="l2 on"><svg class="ic w"><use href="#story"/></svg>1. 首層</li>
      <li class="l1"><i class="tw"></i><svg class="ic"><use href="#secic"/></svg>剖面圖</li>
      <li class="l1"><svg class="tw"><use href="#chev"/></svg><svg class="ic g"><use href="#elic"/></svg>立面圖</li>
      <li class="l2"><svg class="ic"><use href="#elic"/></svg>北向立面圖 (自動重</li>
      <li class="l2"><svg class="ic"><use href="#elic"/></svg>東向立面圖 (自動重</li>
      <li class="l2"><svg class="ic"><use href="#elic"/></svg>南向立面圖 (自動重</li>
      <li class="l2"><svg class="ic"><use href="#elic"/></svg>西向立面圖 (自動重</li>
      <li class="l1"><i class="tw"></i><svg class="ic"><use href="#interior"/></svg>室內立面圖</li>
      <li class="l1"><i class="tw"></i><svg class="ic g"><use href="#worksm"/></svg>工作圖</li>
      <li class="l1"><i class="tw"></i><svg class="ic g"><use href="#detail"/></svg>詳圖</li>
      <li class="l1"><i class="tw"></i><svg class="ic g"><use href="#doc3d"/></svg>3D文檔</li>
      <li class="l1"><svg class="tw"><use href="#chev"/></svg><svg class="ic g"><use href="#box3d"/></svg>3D</li>
      <li class="l2"><svg class="ic"><use href="#box3d"/></svg>簡單透視圖</li>
      <li class="l2"><svg class="ic"><use href="#axo"/></svg>簡單軸測圖</li>
    </ul>
    <div class="vscroll"><svg class="ar up"><use href="#chev"/></svg><div class="track"><i class="thumb"></i></div><svg class="ar"><use href="#chev"/></svg></div>
  </div>
  <div class="hscroll"><svg class="ar back"><use href="#chev"/></svg><div class="track"><i class="thumb"></i></div><svg class="ar fwd"><use href="#chev"/></svg></div>
  <div class="acts"><button class="blue" aria-label="新增"><svg class="ic"><use href="#plus"/></svg></button><button class="blue" aria-label="設定"><svg class="ic"><use href="#listic"/></svg></button><button class="red" aria-label="刪除"><svg class="ic"><use href="#cross"/></svg></button></div>
  <h3><i class="down"></i>屬性</h3>
  <div class="prop"><label for="storyname"><svg class="ic"><use href="#folder"/></svg>1.</label><input id="storyname" value="首層"></div>
  <button class="box settings">設定...</button>
</aside>
</main>

<footer class="status">
  <button aria-label="視窗"><svg class="ic"><use href="#windows"/></svg></button>
  <div class="brand"><b>GRAPHISOFT</b> ID</div>
  <svg class="sizer" viewBox="0 0 10 10"><path d="M7 1h2v2H7zM4 4h2v2H4zM7 4h2v2H7zM1 7h2v2H1zM4 7h2v2H4zM7 7h2v2H7z" fill="#b5b5b5"/></svg>
</footer>
</div>
</body>
</html>
```

FILE: styles.css
```css
* { box-sizing: border-box; }
body {
  margin: 0;
  height: 100vh;
  padding: 0 8px 7px 7px;
  background: #fff;
  overflow: hidden;
  font: 12px/16px "Noto Sans", "Noto Sans CJK TC", sans-serif;
  color: #000;
}
button {
  font: inherit;
  color: inherit;
  background: none;
  border: 0;
  padding: 0;
  display: flex;
  align-items: center;
  justify-content: center;
  white-space: nowrap;
}
input { font: inherit; color: inherit; min-width: 0; border: 1px solid #7a7a7a; background: #fff; padding: 0 3px; }
h1, h2, h3 { margin: 0; font-size: 12px; font-weight: 400; }
i { display: block; flex: none; }
.sprite { position: absolute; width: 0; height: 0; }
.tiny { font: bold 8px "Liberation Sans", sans-serif; fill: #2b3a42; stroke: none; }

/* Icons are drawn around the origin, so every box shifts it to its centre. */
.ic { width: 18px; height: 18px; flex: none; overflow: visible; fill: none; stroke: currentColor; color: #2b3a42; }
.ic use { transform: translate(9px, 9px); }
.ic.w { fill: #fff; }
.tri { width: 0; height: 0; border: 4px solid transparent; border-left: 5px solid #333; border-right: 0; }
.down { width: 0; height: 0; border: 4px solid transparent; border-top: 5px solid #333; border-bottom: 0; }

.window {
  height: 100%;
  display: flex;
  flex-direction: column;
  background: #efefef;
  border: 1px solid #a6a6a6;
  box-shadow: 0 2px 7px rgba(0, 0, 0, .4);
  overflow: hidden;
}

.titlebar { height: 30px; flex: none; background: #fff; display: flex; align-items: center; padding-left: 9px; color: #8c8c8c; }
.logo { width: 14px; height: 14px; margin-right: 6px; }
.titlebar h1 { flex: 1; }
.winbtns { display: flex; }
.winbtns button { width: 45px; height: 28px; }
.winbtns svg { width: 12px; height: 12px; fill: none; stroke: #888; }
.menubar { height: 19px; flex: none; background: #fff; display: flex; gap: 15px; padding-left: 7px; color: #666; }
.docbtns { margin-left: auto; display: flex; gap: 4px; padding-right: 3px; }
.docbtns svg { width: 10px; height: 10px; fill: none; stroke: #aaa; }

.toolbar { height: 36px; flex: none; display: flex; align-items: center; border-bottom: 1px solid #dadada; padding-left: 4px; }
.sep { width: 1px; height: 28px; background: #8c8c8c; margin: 0 3px 0 4px; }
.sep.short { height: 14px; margin: 0; }
.sep.short.lead { margin: 0 4px 0 7px; }
.toolbar button { width: 29px; height: 28px; flex: none; }
.toolbar .lab { width: auto; gap: 4px; padding: 0 0 0 5px; }
.toolbar .lab.wide { padding-left: 11px; gap: 10px; }
.toolbar .caret { width: 18px; }
.toolbar .caret.mid { width: 24px; }
.toolbar .caret.far { width: 27px; padding-left: 10px; }
.edit { display: flex; }
.toolbar .edit .lab { gap: 6px; padding-left: 3px; }
.toolbar .edit .caret.far { width: 32px; padding-left: 6px; }
.caret::before { content: ""; border: 4px solid transparent; border-top: 5px solid #222; border-bottom: 0; }
.caret:disabled::before { border-top-color: #777; }
button:disabled { color: #999; }
button:disabled .ic { color: #aaa; }

.infobox { height: 61px; flex: none; display: flex; border-bottom: 1px solid #dadada; }
.infobox section { width: 185px; flex: none; height: 58px; border-right: 1px solid #8c8c8c; padding: 0 5px 0 5px; }
.infobox .first { width: 190px; padding-left: 9px; background: linear-gradient(#8c8c8c, #8c8c8c) 4px 19px / 1px 22px no-repeat; }
.infobox .last { flex: 1; width: auto; border: 0; padding-right: 0; }
.row { display: flex; align-items: center; gap: 2px; height: 29px; margin-top: 7px; }
.grow { flex: 1; }
.box { background: #e1e1e1; border: 1px solid #adadad; height: 28px; }
.box.fill { flex: 1; padding: 0 4px 0 3px; gap: 4px; }
.box.fill span { flex: 1; text-align: left; }
.box.fill .ic { margin: 0 4px 0 4px; }
.box.fill .ic.tight { margin: 0 1px 0 0; }
.split { width: 48px; gap: 3px; }
.bar { width: 1px; height: 21px; background: #adadad; margin-left: 4px; }
.geo { width: 44px; height: 29px; border: 1px solid transparent; gap: 8px; }
.geo.on { background: #c0dcf3; border-color: #90c8f6; }
.geo.plain { width: 42px; }
.flip { width: 42px; background: #ccc; border-color: #bfbfbf; }
.flip .ic { margin-right: 6px; }
.box.small { width: 42px; gap: 8px; }
.links { display: flex; flex-direction: column; gap: 5px; padding-top: 3px; }
.links div { display: flex; align-items: center; height: 16px; padding: 0 0 0 10px; }
.links span { flex: 1; margin-left: 15px; }
.links button { width: 13px; height: 14px; background: #e1e1e1; border: 1px solid #adadad; }
.offsets { display: flex; }
.tb { width: 43px; height: 40px; fill: none; stroke: #2b3a42; overflow: visible; }
.tb use { transform: translate(20px, 22px); }
.offsets div { flex: 1; display: flex; flex-direction: column; gap: 3px; margin: 2px -2px 0 0; }
.offsets input { width: 100%; height: 18px; }

.workspace { flex: 1; min-height: 0; display: flex; }
h3 { background: #d6d6d6; border-radius: 3px; height: 20px; flex: none; display: flex; align-items: center; gap: 9px; padding-left: 5px; }
.grip { height: 1px; background: #888; margin: 4px auto 0; }
.toolbox { width: 91px; flex: none; border-right: 1px solid #dadada; display: flex; flex-direction: column; overflow: hidden; }
.toolbox .grip { width: 34px; }
.tools { display: grid; grid-template-columns: 44px 44px; padding: 2px 0 4px; }
.tools button { height: 30px; }
.tools button.on { height: 27px; margin-top: 1px; background: #c0dcf3; border: 1px solid #90c8f6; }
.pick { padding-top: 3px; }
.docs { display: flex; flex: 1; min-height: 0; }
.docs .tools { grid-template-columns: 42px 39px; width: 81px; flex: none; height: 85px; overflow: hidden; }
.vscroll { width: 15px; flex: none; display: flex; flex-direction: column; background: #f0f0f0; }
.vscroll.thin { width: 9px; padding: 4px 1px 0 0; }
.ar { width: 100%; height: 17px; flex: none; fill: none; stroke: #555; }
.ar use { transform: translate(8px, 8px); }
.ar.up use { transform: translate(8px, 8px) rotate(180deg); }
.vscroll .track { flex: 1; }
.vscroll .thumb { height: 272px; background: #cdcdcd; }
.thin .ar { height: 15px; overflow: visible; }
.thin .ar use { transform: translate(5px, 7px); }
.thin .ar.up use { transform: translate(5px, 3px) rotate(180deg); }
.thin .ar.up { height: 11px; }
.thin .track { background: #fff; }
.thin .thumb { height: 17px; }

.center { flex: 1; min-width: 0; display: flex; flex-direction: column; }
.tabs { height: 22px; flex: none; display: flex; background: #dadada; }
.overview { width: 26px; }
.tab { width: 300px; flex: none; display: flex; align-items: center; padding-left: 4px; gap: 2px; border-right: 1px solid #c4c4c4; }
.tab.on { background: #fff; border: 0; }
.tab span { flex: 1; }
.tab button { width: 26px; font-size: 15px; font-weight: 700; }
.navpop { margin-left: auto; width: 50px; background: #ebebeb; gap: 11px; padding-left: 5px; }
.canvas { flex: 1; min-height: 0; background: #fff; position: relative; overflow: hidden; }
.drawing { position: absolute; inset: 0; width: 100%; height: 100%; }
.handle { position: absolute; background: #f3f3f3; display: flex; align-items: center; justify-content: center; border-radius: 4px; }
.handle.top, .handle.bottom { width: 32px; height: 17px; left: 50%; margin-left: -16px; }
.handle.left, .handle.right { width: 17px; height: 32px; top: 50%; margin-top: -16px; }
.handle.top { top: 0; }
.handle.bottom { bottom: 0; }
.handle.left { left: 0; }
.handle.right { right: 0; }
.handle::before { content: ""; width: 26px; height: 1px; background: repeating-linear-gradient(90deg, #ffa555 0 5px, transparent 5px 7px); }
.handle.left::before, .handle.right::before { width: 1px; height: 26px; background: repeating-linear-gradient(#ffa555 0 5px, transparent 5px 7px); }

.quick { height: 19px; flex: none; display: flex; }
.zooms { width: 71px; flex: none; display: flex; gap: 6px; padding-left: 1px; }
.q { flex: 1 1 0; min-width: 0; border-left: 1px solid #999; padding: 0 4px 0 5px; }
.q span { flex: 1; text-align: center; margin-left: 8px; }

.navigator { width: 180px; flex: none; border-left: 1px solid #dadada; padding: 0 1px 0 0; display: flex; flex-direction: column; }
.navigator .grip { width: 68px; margin-left: 56px; }
.maps { display: flex; align-items: center; padding: 4px 2px 0; height: 33px; flex: none; }
.maps button { width: 30px; height: 29px; }
.maps .on { background: #c0dcf3; border: 1px solid #90c8f6; }
.maps .sep { height: 18px; margin: 0 6px 0 5px; }
.maps .menu { width: 33px; height: 21px; margin-left: auto; gap: 4px; }
.search { height: 23px; flex: none; margin: 6px 0 2px 2px; border: 1px solid #7a7a7a; background: #fff; display: flex; align-items: center; padding-left: 2px; }
.search input { flex: 1; border: 0; padding: 0 2px; }
.search input::placeholder { color: #666; opacity: 1; }
.search .ic { color: #666; }
.treewrap { flex: 1; min-height: 0; display: flex; background: #fff; overflow: hidden; }
.tree { list-style: none; margin: 0; padding: 0; flex: 1; min-width: 0; overflow: hidden; }
.tree li { height: 22px; display: flex; align-items: center; white-space: nowrap; padding-left: 4px; overflow: hidden; }
.tree .ic { margin-right: 5px; }
.tree .g { fill: #e8e8e8; }
.tree .l1 { padding-left: 14px; }
.tree .l2 { padding-left: 41px; }
.tree .on { background: #d9d9d9; font-weight: 500; }
.tw { width: 17px; height: 16px; flex: none; fill: none; stroke: #444; }
.tw use { transform: translate(7px, 8px); }
.hscroll { height: 15px; flex: none; display: flex; margin-right: 15px; }
.hscroll .ar { width: 17px; height: 15px; }
.hscroll .track { flex: 1; }
.hscroll .thumb { width: 101px; height: 15px; background: #cdcdcd; }
.ar.back use { transform: translate(8px, 7px) rotate(90deg); }
.ar.fwd use { transform: translate(8px, 7px) rotate(-90deg); }
.acts { display: flex; height: 36px; flex: none; padding-left: 2px; }
.acts button { width: 30px; }
.blue .ic { color: #2a7de1; }
.red .ic { color: #f04a23; stroke-width: 2; }
.navigator h3 { margin: 0 0 0 2px; height: 21px; gap: 10px; padding-left: 6px; }
.prop { display: flex; align-items: center; margin: 5px 0 3px 2px; flex: none; }
.prop label { width: 60px; display: flex; align-items: center; gap: 2px; }
.prop input { flex: 1; height: 19px; }
.settings { height: 21px; margin: 0 1px 3px 3px; flex: none; }

.status { height: 23px; flex: none; border-top: 1px solid #cfcfcf; display: flex; justify-content: flex-end; }
.status button { width: 26px; }
.brand { width: 131px; border: solid #cfcfcf; border-width: 0 1px; text-align: center; font: 13px/22px Lato, sans-serif; color: #aaa; }
.brand b { font-weight: 500; color: #999; }
.sizer { width: 10px; height: 10px; margin: auto 1px 1px 11px; }
```
